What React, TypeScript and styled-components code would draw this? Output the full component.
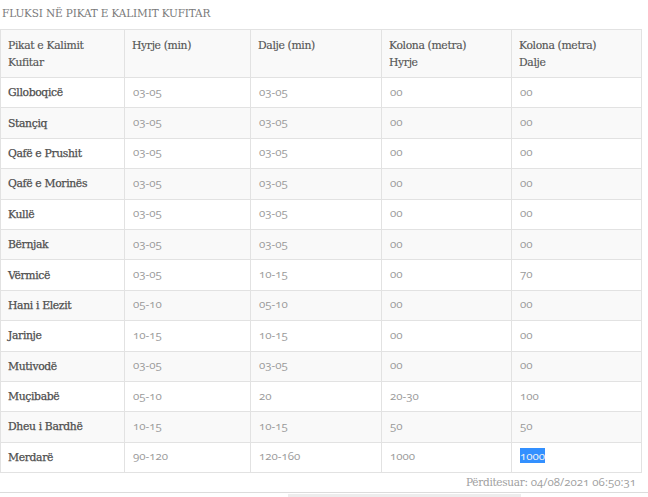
import React from "react";
import styled, { createGlobalStyle } from "styled-components";

const Global = createGlobalStyle`
  html, body { margin: 0; padding: 0; background: #fff; }
  body { font-family: "DejaVu Serif", serif; }
`;

const Page = styled.div`
  width: 648px;
  height: 497px;
  overflow: hidden;
`;

const Title = styled.div`
  font-family: "DejaVu Serif", serif;
  font-size: 10.5px;
  letter-spacing: -0.15px;
  line-height: 16px;
  color: #7a7a7a;
  text-transform: uppercase;
  padding: 5px 0 0 2px;
  margin-bottom: 8px;
`;

const Table = styled.table`
  width: 641px;
  border-collapse: collapse;
  table-layout: fixed;
  border: 1px solid #e2e2e2;
`;

const Row = styled.tr<{ $striped: boolean }>`
  background: ${(p) => (p.$striped ? "#f9f9f9" : "#fff")};
`;

const Th = styled.th`
  text-align: left;
  vertical-align: top;
  font-family: "DejaVu Serif", serif;
  font-weight: normal;
  font-size: 10.8px;
  letter-spacing: -0.35px;
  line-height: 17px;
  color: #555;
  -webkit-text-stroke: 0.15px #555;
  padding: 7px 8px 6px 7px;
  border: 1px solid #e2e2e2;
  height: 34px;
`;

const NameCell = styled.td`
  font-family: "DejaVu Serif", serif;
  font-size: 10.8px;
  letter-spacing: -0.35px;
  font-weight: normal;
  line-height: 17px;
  color: #4e4e4e;
  -webkit-text-stroke: 0.25px #4e4e4e;
  padding: 6px 8px 6px 7px;
  border: 1px solid #e2e2e2;
  height: 17.4px;
`;

const NumCell = styled.td`
  font-family: "Open Sans", "Noto Sans", sans-serif;
  font-feature-settings: "onum" 1;
  font-variant-numeric: oldstyle-nums;
  font-size: 11.5px;
  font-weight: 400;
  line-height: 16px;
  color: #9a9a9a;
  padding: 5px 8px 7px 8px;
  border: 1px solid #e2e2e2;
  height: 17.4px;
`;

const Selected = styled.span`
  background: #3390ff;
  color: #f4f4f4;
`;

const Footer = styled.div`
  width: 641px;
  text-align: right;
  font-size: 11.5px;
  line-height: 17px;
  color: #a0a0a0;
  padding: 0 5px 0 0;
  box-sizing: border-box;
`;

const FooterLabel = styled.span`
  font-family: "DejaVu Serif", serif;
  font-size: 10.5px;
  letter-spacing: -0.3px;
`;

const FooterNum = styled.span`
  font-family: "Open Sans", "Noto Sans", sans-serif;
  font-variant-numeric: oldstyle-nums;
`;

const Divider = styled.div`
  margin-top: 1px;
  border-top: 1px solid #dcdcdc;
  padding-left: 288px;
  padding-top: 1px;
`;

const Bar = styled.div`
  width: 233px;
  height: 8px;
  background: #ededed;
`;

const headers: string[][] = [
  ["Pikat e Kalimit", "Kufitar"],
  ["Hyrje (min)"],
  ["Dalje (min)"],
  ["Kolona (metra)", "Hyrje"],
  ["Kolona (metra)", "Dalje"],
];

const widths = [124, 126, 131, 130, 130];

const rows: [string, string, string, string, string][] = [
  ["Glloboqicë", "03-05", "03-05", "00", "00"],
  ["Stançiq", "03-05", "03-05", "00", "00"],
  ["Qafë e Prushit", "03-05", "03-05", "00", "00"],
  ["Qafë e Morinës", "03-05", "03-05", "00", "00"],
  ["Kullë", "03-05", "03-05", "00", "00"],
  ["Bërnjak", "03-05", "03-05", "00", "00"],
  ["Vërmicë", "03-05", "10-15", "00", "70"],
  ["Hani i Elezit", "05-10", "05-10", "00", "00"],
  ["Jarinje", "10-15", "10-15", "00", "00"],
  ["Mutivodë", "03-05", "03-05", "00", "00"],
  ["Muçibabë", "05-10", "20", "20-30", "100"],
  ["Dheu i Bardhë", "10-15", "10-15", "50", "50"],
  ["Merdarë", "90-120", "120-160", "1000", "1000"],
];

export default function App() {
  return (
    <Page>
      <Global />
      <Title>Fluksi në pikat e kalimit kufitar</Title>
      <Table>
        <colgroup>
          {widths.map((w, i) => (
            <col key={i} style={{ width: w }} />
          ))}
        </colgroup>
        <thead>
          <Row $striped>
            {headers.map((h, i) => (
              <Th key={i}>
                {h.map((line, j) => (
                  <React.Fragment key={j}>
                    {j > 0 && <br />}
                    {line}
                  </React.Fragment>
                ))}
              </Th>
            ))}
          </Row>
        </thead>
        <tbody>
          {rows.map((r, i) => (
            <Row key={r[0]} $striped={i % 2 === 1}>
              <NameCell>{r[0]}</NameCell>
              <NumCell>{r[1]}</NumCell>
              <NumCell>{r[2]}</NumCell>
              <NumCell>{r[3]}</NumCell>
              <NumCell>
                {i === rows.length - 1 ? <Selected>{r[4]}</Selected> : r[4]}
              </NumCell>
            </Row>
          ))}
        </tbody>
      </Table>
      <Footer>
        <FooterLabel>Përditesuar: </FooterLabel>
        <FooterNum>04/08/2021 06:50:31</FooterNum>
      </Footer>
      <Divider>
        <Bar />
      </Divider>
    </Page>
  );
}
